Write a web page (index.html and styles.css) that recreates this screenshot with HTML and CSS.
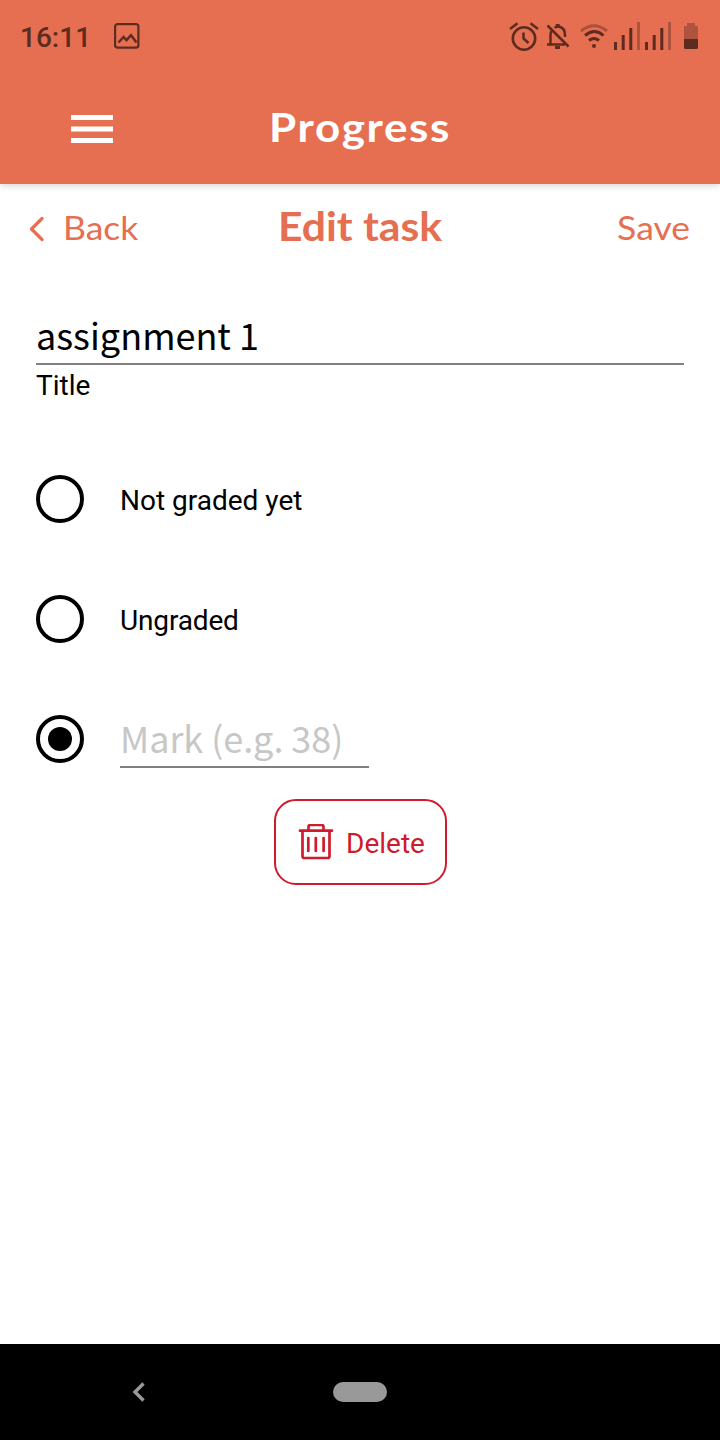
FILE: index.html
```html
<!DOCTYPE html>
<html lang="en">
<head>
<meta charset="utf-8">
<title>Edit task</title>
<link rel="stylesheet" href="styles.css">
</head>
<body>
<div class="screen">
  <header class="header">
    <div class="status">
      <span class="clock">16:11</span>
      <svg class="picture" width="28" height="28" viewBox="0 0 28 28" fill="none" stroke="#5d2c20" stroke-width="2.2"><rect x="2.1" y="2.1" width="23.3" height="23.6" rx="2.5"/><path d="M5.500 20.500l5-5.500 3 3.200 4.500-5 5.500 7.300" stroke-width="2.500"/></svg>
      <svg class="indicators" width="192" height="34" viewBox="508 20 192 34" fill="none" stroke="#5d2c20">
        <g stroke-width="2.6"><circle cx="524" cy="38.500" r="11.200"/><path d="M523.500 32.500v6l5 4.500M510 29l7.500-5.700M530.500 23.300L538 29"/></g>
        <g stroke-width="2.500"><path d="M547.500 25.500l21 21M547 44.500h18M550.500 44v-9q0-2.500 1.200-4.700M554.500 27.800q2-1.300 4.500-1.300 6 1.500 6 8.500v2"/><path d="M557.700 24v3" stroke-width="4"/><path d="M555 47.500h5" stroke-width="3"/></g>
        <path d="M581 31q13-10.500 26 0" stroke="#a9513c" stroke-width="3"/>
        <path d="M585 35.500q9.500-8 18.500 0M589 40.500q5-4 10 0" stroke-width="3"/>
        <circle cx="594" cy="46" r="2" fill="#5d2c20" stroke="none"/>
        <path d="M615.500 42v8M623.200 35v15M630.800 28v22M646.500 42v8M654.200 35v15M661.800 28v22" stroke-width="3"/>
        <path d="M638.500 22v28M669.500 22v28" stroke="#ad533e" stroke-width="3"/>
        <path d="M687 23h8v3h3v13h-14V26h3z" fill="#ad533e" stroke="none"/><path d="M684 39h14v8.500q0 1.500-1.500 1.500h-11q-1.500 0-1.500-1.500z" fill="#5d2c20" stroke="none"/>
      </svg>
    </div>
    <div class="toolbar">
      <svg class="menu" width="42" height="28" viewBox="0 0 42 28" fill="#fff"><path d="M0 0h42v5H0zM0 11.500h42v5H0zM0 23h42v5H0z"/></svg>
      <h1 class="app-title">Progress</h1>
    </div>
  </header>
  <nav class="subbar">
    <a class="back"><svg width="16" height="26" viewBox="0 0 16 26" fill="none" stroke="#e66f51" stroke-width="3.300" stroke-linecap="round" stroke-linejoin="round"><path d="M13 2.500L2.500 13 13 23.500"/></svg><span class="back-label">Back</span></a>
    <h2 class="page-title">Edit task</h2>
    <a class="save">Save</a>
  </nav>
  <main class="form">
    <div class="field">assignment 1</div>
    <div class="caption">Title</div>
    <div class="options">
      <div class="option"><span class="radio"></span><span class="label">Not graded yet</span></div>
      <div class="option"><span class="radio"></span><span class="label ungraded">Ungraded</span></div>
      <div class="option"><span class="radio checked"></span><span class="mark">Mark (e.g. 38)</span></div>
    </div>
    <div class="delete">
      <svg width="36" height="36" viewBox="0 0 36 36" fill="none" stroke="#cf1b2b" stroke-width="2.700" stroke-linecap="round"><path d="M2 6.700h32M10.500 6V3q0-2 2-2h11q2 0 2 2v3M4.500 7v25q0 2 2 2h23q2 0 2-2V7M10.300 14v13M17.800 14v13M25.600 14v13"/></svg>
      <span class="delete-label">Delete</span>
    </div>
  </main>
  <footer class="system-nav">
    <svg width="14" height="20" viewBox="0 0 14 20" fill="none" stroke="#999" stroke-width="3.400"><path d="M12.500 1.500L4 10l8.500 8.500"/></svg>
    <span class="home"></span>
  </footer>
</div>
</body>
</html>
```
FILE: styles.css
```css
* { box-sizing: border-box; }
body { margin: 0; background: #fff; }
h1, h2 { margin: 0; }
.screen { width: 720px; height: 1440px; display: flex; flex-direction: column; font-family: Roboto, sans-serif; font-size: 28px; color: #000; white-space: nowrap; overflow: hidden; }
.header { height: 184px; flex: none; background: #e66f51; box-shadow: 0 1px 8px rgba(0, 0, 0, .2); }
.status { height: 74px; padding: 0 20px; display: flex; align-items: center; }
.clock { width: 93px; font-weight: 500; line-height: 72px; padding-top: 2px; color: #5d2c20; }
.picture { margin-top: -2px; }
.indicators { margin-left: auto; }
.toolbar { height: 110px; padding: 0 71px; display: grid; grid-template-columns: 90px 1fr 90px; align-items: center; }
.app-title { font: 700 40px/104px Lato, sans-serif; letter-spacing: 1.5px; color: #fff; text-align: center; padding-bottom: 4px; transform: scaleX(1.1); }
.subbar { height: 120px; padding: 0 30px 0 29px; display: grid; grid-template-columns: 150px 1fr 151px; align-items: start; font: 400 32px/87px Lato, sans-serif; color: #e66f51; }
.back { display: flex; align-items: center; gap: 18px; }
.back svg { margin-top: 2px; }
.back-label { transform: scaleX(1.11); transform-origin: left; }
.page-title { font: 700 40px/85px Lato, sans-serif; text-align: center; transform: translateX(1px) scaleX(1.067); }
.save { text-align: right; transform: scaleX(1.11); transform-origin: right; }
.form { flex: 1; padding: 0 36px; display: flex; flex-direction: column; }
.field { height: 61px; border-bottom: 2px solid #808080; font: 400 36px/60px "Noto Sans CJK SC", sans-serif; }
.caption { line-height: 42px; }
.options { margin-top: 32px; }
.option { height: 120px; display: flex; align-items: center; gap: 36px; }
.radio { width: 48px; height: 48px; border: 4px solid #000; border-radius: 50%; display: grid; place-items: center; }
.checked::after { content: ""; width: 24px; height: 24px; border-radius: 50%; background: #000; }
.label { padding-top: 3px; }
.ungraded { letter-spacing: -.15px; }
.mark { width: 249px; height: 58px; border-bottom: 2px solid #808080; font: 400 36px/54px "Noto Sans CJK SC", sans-serif; letter-spacing: -.05px; color: #c7c7c7; }
.delete { align-self: center; width: 173px; height: 86px; border: 2px solid #cf1b2b; border-radius: 22px; display: flex; align-items: center; padding-left: 22px; gap: 12.500px; color: #cf1b2b; }
.delete-label { padding-top: 3px; }
.system-nav { height: 96px; background: #000; padding-left: 131px; display: flex; align-items: center; }
.home { width: 54px; height: 20px; margin-left: 188px; border-radius: 10px; background: #999; }
```
